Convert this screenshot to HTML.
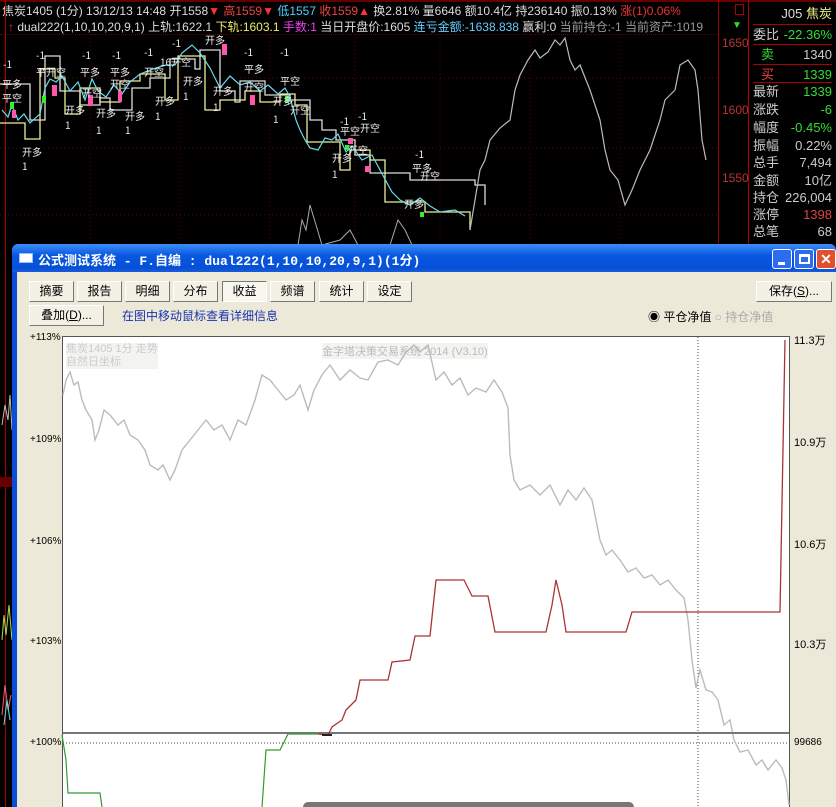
<!DOCTYPE html>
<html><head><meta charset="utf-8"><style>
*{margin:0;padding:0;box-sizing:border-box}
body{width:836px;height:807px;overflow:hidden;background:#000;position:relative;font-family:"Liberation Sans","Noto Sans CJK SC",sans-serif;font-size:12px}
.abs{position:absolute;white-space:nowrap}
.hdr{font-size:12px;color:#ddd;line-height:14px}
.rp{position:absolute;left:748px;top:0;width:88px;height:245px;border-left:1px solid #a00;}
.rp div{position:absolute;left:4px;right:4px;font-size:13px;height:19px;line-height:19px;color:#ccc}
.rp span{float:right}
.btn{position:absolute;height:21px;background:#f3f1e6;border:1px solid;border-color:#fff #777 #777 #fff;font-size:12px;line-height:19px;text-align:center;color:#000}
.yl{position:absolute;font-size:10px;color:#000;font-family:"Liberation Sans",sans-serif}
</style></head><body>
<div class="abs hdr" style="left:2px;top:4px;color:#ddd">焦炭1405 (1分) 13/12/13 14:48 开1558<span style="color:#f33">▼</span> <span style="color:#e44">高1559</span><span style="color:#f33">▼</span> <span style="color:#5cf">低1557</span> <span style="color:#e44">收1559</span><span style="color:#f33">▲</span> 换2.81% 量6646 额10.4亿 持236140 振0.13% <span style="color:#e33">涨(1)0.06%</span></div>
<div class="abs hdr" style="left:8px;top:20px"><span style="color:#f22">↑</span> dual222(1,10,10,20,9,1) 上轨:1622.1 <span style="color:#ee6">下轨:1603.1</span> <span style="color:#e4e">手数:1</span> 当日开盘价:1605 <span style="color:#6cf">连亏金额:-1638.838</span> 赢利:0 <span style="color:#999">当前持仓:-1 当前资产:1019</span></div>
<div class="abs" style="left:0;top:0;width:836px;height:2px;background:#600"></div>
<div class="abs" style="left:0;top:34px;width:718px;height:1px;border-top:1px dotted #600"></div>
<div class="abs" style="left:718px;top:0;width:1px;height:245px;background:#900"></div>
<div class="abs" style="left:5px;top:0;width:1px;height:807px;background:#a00"></div>
<div class="abs" style="left:722px;top:36px;color:#b33;font-size:12px">1650</div>
<div class="abs" style="left:722px;top:103px;color:#b33;font-size:12px">1600</div>
<div class="abs" style="left:722px;top:171px;color:#b33;font-size:12px">1550</div>
<svg class="abs" style="left:0;top:30px" width="718" height="215">
<g stroke="#600" stroke-dasharray="1,3" stroke-width="1"><line x1="0" y1="48" x2="718" y2="48"/><line x1="0" y1="118" x2="718" y2="118"/><line x1="0" y1="185" x2="718" y2="185"/><line x1="90" y1="0" x2="90" y2="215"/><line x1="180" y1="0" x2="180" y2="215"/><line x1="270" y1="0" x2="270" y2="215"/><line x1="355" y1="0" x2="355" y2="215"/><line x1="440" y1="0" x2="440" y2="215"/><line x1="530" y1="0" x2="530" y2="215"/><line x1="620" y1="0" x2="620" y2="215"/></g>
<polyline fill="none" stroke="#ddd" stroke-width="1.3" points="0,54 30,54 30,90 45,90 45,26 60,26 60,61 80,61 80,75 100,75 100,68 110,68 110,80 132,80 132,58 150,58 150,48 170,48 170,29 195,29 195,39 200,39 200,20 220,20 220,61 235,61 235,72 240,72 240,51 265,51 265,65 290,65 290,70 310,70 310,90 322,90 322,100 336,100 336,110 355,110 355,125 370,125 370,143 410,143 410,150 475,150 475,155 485,155 485,175"/>
<polyline fill="none" stroke="#ee9" stroke-width="1.3" points="0,93 25,93 25,109 40,109 40,39 55,39 55,48 65,48 65,84 80,84 80,58 100,58 100,72 120,72 120,51 140,51 140,44 165,44 165,70 178,70 178,26 205,26 205,80 220,80 220,70 245,70 245,61 260,61 260,72 280,72 280,64 295,64 295,75 307,75 307,112 340,112 340,140 350,140 350,120 370,120 370,130 385,130 385,172 425,172 425,182 470,182 470,200"/>
<polyline fill="none" stroke="#6de" stroke-width="1.2" points="2,80 8,87 12,75 18,90 24,84 30,93 40,84 45,58 50,49 56,52 62,46 70,61 78,52 85,70 92,49 98,61 106,67 114,55 122,64 130,52 140,44 148,41 156,38 166,35 175,35 182,23 192,15 200,23 210,38 220,58 230,46 240,55 250,52 260,61 268,55 278,64 285,58 290,67 296,90 300,100 305,110 310,118 318,120 325,108 332,110 338,104 346,122 352,116 362,130 372,125 380,140 392,162 400,170 410,175 420,168 430,176 440,182 455,180 465,186"/>
<polyline fill="none" stroke="#aaa" stroke-width="1" points="298,215 302,190 306,200 310,175 316,195 322,215 340,210 350,200 358,215 390,215 398,190 405,200 412,215"/>
<polyline fill="none" stroke="#bbb" stroke-width="1.2" points="470,200 475,170 480,140 485,130 490,110 500,98 510,90 515,60 520,45 528,30 535,20 540,28 548,22 555,10 560,15 565,8 570,30 575,40 580,35 590,60 595,75 600,90 605,120 610,140 618,150 625,175 632,160 640,140 650,120 660,90 665,70 675,60 680,35 688,30 695,40 698,60 702,110 706,130"/>
<g fill="#f5a"><rect x="52" y="55" width="5" height="11"/><rect x="222" y="14" width="5" height="11"/><rect x="88" y="65" width="5" height="11"/><rect x="250" y="65" width="5" height="10"/><rect x="12" y="80" width="4" height="8"/><rect x="118" y="61" width="4" height="11"/><rect x="348" y="108" width="5" height="6"/><rect x="365" y="136" width="5" height="6"/></g>
<g fill="#3e3"><rect x="42" y="66" width="4" height="7"/><rect x="285" y="66" width="4" height="7"/><rect x="345" y="115" width="4" height="5"/><rect x="420" y="182" width="4" height="5"/><rect x="10" y="72" width="4" height="7"/></g>
<g fill="#eee" font-size="10" font-family="Noto Sans CJK SC,sans-serif"><text x="3" y="38">-1</text><text x="2" y="58">平多</text><text x="2" y="72">平空</text><text x="22" y="126">开多</text><text x="22" y="140">1</text><text x="36" y="29">-1</text><text x="36" y="46">平开空</text><text x="82" y="29">-1</text><text x="80" y="46">平多</text><text x="82" y="67">开空</text><text x="65" y="84">开多</text><text x="65" y="99">1</text><text x="96" y="87">开多</text><text x="96" y="104">1</text><text x="112" y="29">-1</text><text x="110" y="46">平多</text><text x="110" y="58">开空</text><text x="125" y="90">开多</text><text x="125" y="104">1</text><text x="144" y="26">-1</text><text x="144" y="46">开空</text><text x="155" y="75">开多</text><text x="155" y="90">1</text><text x="172" y="17">-1</text><text x="160" y="36">16开空</text><text x="183" y="55">开多</text><text x="183" y="70">1</text><text x="205" y="14">开多</text><text x="213" y="65">开多</text><text x="213" y="81">1</text><text x="244" y="26">-1</text><text x="244" y="43">平多</text><text x="244" y="61">开空</text><text x="280" y="26">-1</text><text x="280" y="55">平空</text><text x="273" y="75">开多</text><text x="273" y="93">1</text><text x="290" y="84">开空</text><text x="340" y="95">-1</text><text x="358" y="90">-1</text><text x="340" y="105">平空</text><text x="360" y="102">开空</text><text x="348" y="124">开空</text><text x="332" y="132">开多</text><text x="332" y="148">1</text><text x="415" y="128">-1</text><text x="412" y="142">平多</text><text x="420" y="150">开空</text><text x="404" y="178">开多</text></g>
</svg>
<div class="rp">
<div style="top:4px;text-align:right;color:#ddd">J05 <span style="float:none;color:#ee8">焦炭</span></div>
<div style="top:24px;border-top:1px solid #a00">委比<span style="color:#3d3">-22.36%</span></div>
<div style="top:44px;border-top:1px solid #a00"><b style="color:#3d3;font-weight:normal;margin-left:8px">卖</b><span>1340</span></div>
<div style="top:64px;border-top:1px solid #a00;border-bottom:1px solid #a00"><b style="color:#e44;font-weight:normal;margin-left:8px">买</b><span style="color:#3d3">1339</span></div>
<div style="top:82px">最新<span style="color:#3d3">1339</span></div>
<div style="top:100px">涨跌<span style="color:#3d3">-6</span></div>
<div style="top:118px">幅度<span style="color:#3d3">-0.45%</span></div>
<div style="top:136px">振幅<span>0.22%</span></div>
<div style="top:153px">总手<span>7,494</span></div>
<div style="top:171px">金额<span>10亿</span></div>
<div style="top:188px">持仓<span>226,004</span></div>
<div style="top:205px">涨停<span style="color:#d44">1398</span></div>
<div style="top:222px">总笔<span>68</span></div>
</div>
<div class="abs" style="left:732px;top:20px;color:#3d3;font-size:10px">▼</div>
<div class="abs" style="left:735px;top:4px;width:9px;height:11px;border:1px solid #a00"></div>
<svg class="abs" style="left:0;top:245px" width="14" height="562"><polyline fill="none" stroke="#bbb" points="2,180 5,160 8,175 10,150 12,185"/><rect x="0" y="232" width="14" height="10" fill="#600"/><polyline fill="none" stroke="#ad5" points="2,395 4,370 6,390 9,360 12,395"/><polyline fill="none" stroke="#e66" points="2,470 5,440 8,465 11,450"/><polyline fill="none" stroke="#6de" points="4,480 7,455 10,475"/></svg>
<div class="abs" style="left:12px;top:244px;width:824px;height:563px;background:#0a4ed8;border-radius:6px 6px 0 0"></div>
<div class="abs" style="left:12px;top:244px;width:824px;height:28px;border-radius:6px 6px 0 0;background:linear-gradient(#3d8ef8,#0a58e0 40%,#0650d8 85%,#1a5ad8)"></div>
<div class="abs" style="left:19px;top:253px;width:14px;height:10px;background:#fff;border:1px solid #9bf"></div>
<div class="abs" style="left:38px;top:250px;color:#fff;font-size:13px;font-weight:bold;font-family:'Liberation Mono','Noto Sans CJK SC',monospace">公式测试系统 - F.自编 : dual222(1,10,10,20,9,1)(1分)</div>
<div class="abs" style="left:772px;top:249px;width:20px;height:20px;border:1px solid #fff;border-radius:3px;background:#2c6cf0"><div style="position:absolute;left:5px;top:12px;width:7px;height:3px;background:#fff"></div></div>
<div class="abs" style="left:794px;top:249px;width:20px;height:20px;border:1px solid #fff;border-radius:3px;background:#2c6cf0"><div style="position:absolute;left:4px;top:4px;width:11px;height:10px;border:2px solid #fff;border-top-width:3px"></div></div>
<div class="abs" style="left:816px;top:249px;width:20px;height:20px;border:1px solid #fff;border-radius:3px;background:#e0502c;color:#fff;font-weight:bold;font-size:14px;text-align:center;line-height:18px">✕</div>
<div class="abs" style="left:17px;top:272px;width:819px;height:535px;background:#ece9d8"></div>
<div class="btn" style="left:29px;top:281px;width:45px">摘要</div>
<div class="btn" style="left:77px;top:281px;width:45px">报告</div>
<div class="btn" style="left:125px;top:281px;width:45px">明细</div>
<div class="btn" style="left:173px;top:281px;width:45px">分布</div>
<div class="btn" style="left:222px;top:281px;width:45px;border-color:#777 #fff #fff #777;background:#f7f6ef">收益</div>
<div class="btn" style="left:270px;top:281px;width:45px">频谱</div>
<div class="btn" style="left:319px;top:281px;width:45px">统计</div>
<div class="btn" style="left:367px;top:281px;width:45px">设定</div>
<div class="btn" style="left:29px;top:305px;width:75px">叠加(<u>D</u>)...</div>
<div class="abs" style="left:122px;top:307px;color:#1a32b0;font-size:12px">在图中移动鼠标查看详细信息</div>
<div class="btn" style="left:756px;top:281px;width:76px">保存(<u>S</u>)...</div>
<div class="abs" style="left:648px;top:308px;font-size:12px">◉ 平仓净值 <span style="color:#aaa">○ 持仓净值</span></div>
<div class="abs" style="left:62px;top:336px;width:728px;height:471px;background:#fff;border:1px solid #555;border-bottom:none"></div>
<div class="yl" style="left:30px;top:332px">+113%</div>
<div class="yl" style="left:30px;top:434px">+109%</div>
<div class="yl" style="left:30px;top:536px">+106%</div>
<div class="yl" style="left:30px;top:636px">+103%</div>
<div class="yl" style="left:30px;top:737px">+100%</div>
<div class="yl" style="left:794px;top:332px;font-size:11px">11.3万</div>
<div class="yl" style="left:794px;top:434px;font-size:11px">10.9万</div>
<div class="yl" style="left:794px;top:536px;font-size:11px">10.6万</div>
<div class="yl" style="left:794px;top:636px;font-size:11px">10.3万</div>
<div class="yl" style="left:794px;top:737px">99686</div>
<div class="abs" style="left:66px;top:343px;color:#ccc;font-size:11px;line-height:13px;background:#f3f3f0">焦炭1405 1分 走势<br>自然日坐标</div>
<div class="abs" style="left:322px;top:343px;color:#bbb;font-size:11px;background:#f3f3f0">金字塔决策交易系统 2014 (V3.10)</div>
<svg class="abs" style="left:0;top:0" width="836" height="807">
<line x1="63" y1="743" x2="789" y2="743" stroke="#444" stroke-dasharray="1,2"/>
<line x1="698" y1="337" x2="698" y2="807" stroke="#444" stroke-dasharray="1,2"/>
<polyline fill="none" stroke="#bbb" stroke-width="1.4" points="63,395 66,380 70,372 74,385 78,382 82,400 86,410 92,420 95,440 99,430 104,410 110,415 118,425 124,420 130,435 138,440 145,450 150,465 158,470 163,465 170,480 175,470 182,450 190,440 198,430 206,420 214,430 222,425 230,440 238,420 246,425 255,400 262,375 270,380 278,390 286,400 294,395 300,385 308,410 314,390 322,375 330,365 340,380 350,370 360,378 368,380 378,362 388,360 398,365 406,352 414,345 420,352 428,345 436,380 444,372 452,385 460,378 468,395 476,388 486,392 494,380 502,392 508,408 510,455 514,480 520,490 530,485 540,495 550,485 560,505 568,490 576,500 584,488 592,500 600,540 606,555 612,550 620,560 628,572 636,568 644,578 652,575 660,585 668,580 676,590 684,598 688,620 692,660 696,688 700,670 706,690 712,692 718,700 724,725 730,720 734,740 740,752 748,750 756,765 762,760 768,770 776,760 782,768 786,780 789,805"/>
<line x1="63" y1="733" x2="789" y2="733" stroke="#777" stroke-width="2"/>
<polyline fill="none" stroke="#a33" stroke-width="1.3" points="318,734 328,735 332,727 342,720 346,710 356,700 360,680 388,680 392,662 410,660 415,636 430,636 436,580 464,580 472,596 488,596 495,632 546,632 552,605 556,580 562,605 566,632 626,632 632,612 780,612 785,340"/>
<polyline fill="none" stroke="#393" stroke-width="1.2" points="62,735 66,760 68,793 100,793 102,807"/><polyline fill="none" stroke="#393" stroke-width="1.2" points="262,807 266,750 280,750 288,734 318,734"/>
<line x1="322" y1="735" x2="332" y2="735" stroke="#222" stroke-width="2"/>
<rect x="303" y="802" width="331" height="12" rx="5" fill="#777"/>
</svg>
</body></html>
